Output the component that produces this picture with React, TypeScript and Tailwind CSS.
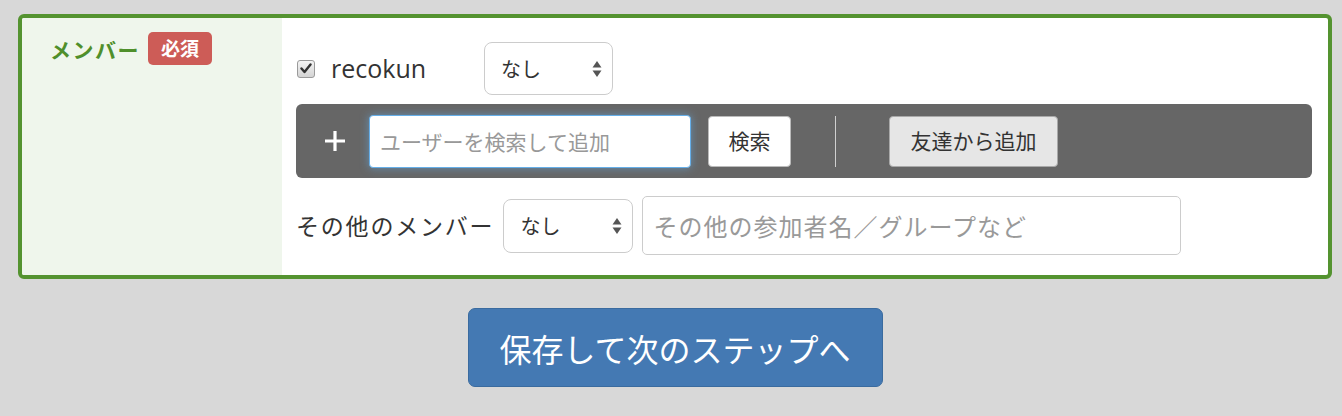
import React from 'react'

const jp = { fontFamily: '"Noto Sans CJK JP", "Noto Sans", sans-serif' }

const SelectBox = ({ value, className }: { value: string; className: string }) => {
  return (
    <div
      className={`flex items-center justify-between rounded-lg border border-[#cccccc] bg-white pl-[16px] pr-[10px] text-[20px] text-[#333] ${className}`}
    >
      <span>{value}</span>
      <svg width="10" height="20" viewBox="0 0 10 20">
        <path d="M5 2 L9.5 8.5 H0.5 Z" fill="#555" />
        <path d="M5 18 L9.5 11.5 H0.5 Z" fill="#555" />
      </svg>
    </div>
  )
}

export default function App() {
  return (
    <div className="min-h-[416px] w-full bg-[#d8d8d8] pt-[14px]" style={jp}>
      <div className="ml-[18px] mr-[10px]">
        {/* member card */}
        <div className="flex h-[265px] overflow-hidden rounded-[6px] border-4 border-[#549330] bg-white">
          <div className="flex w-[260px] flex-none items-start gap-[8px] bg-[#eff6ec] pl-[28px] pt-[14px]">
            <span className="mt-[2px] text-[21px] font-bold tracking-[1.5px] text-[#4f8f2b]">メンバー</span>
            <span className="flex h-[33px] w-[64px] items-center justify-center rounded-[5px] bg-[#cd5c57] text-[19px] font-bold text-white">
              必須
            </span>
          </div>

          <div className="flex flex-1 flex-col pl-[14px] pr-[16px] pt-[24px]">
            <div className="flex items-center">
              <span className="ml-[1px] flex h-[18px] w-[18px] items-center justify-center rounded-[3px] border border-[#9a9a9a] bg-gradient-to-b from-[#f4f4f4] to-[#d4d4d4]">
                <svg width="12" height="11" viewBox="0 0 12 11">
                  <path d="M1.5 5.5 L4.5 9 L10.5 1.5" stroke="#333" strokeWidth="2.4" fill="none" strokeLinecap="round" strokeLinejoin="round" />
                </svg>
              </span>
              <span className="ml-[16px] w-[153px] text-[25px] font-medium text-[#333]" style={{ fontFamily: '"Open Sans", sans-serif' }}>
                recokun
              </span>
              <SelectBox value="なし" className="h-[53px] w-[129px]" />
            </div>

            <div className="mt-[9px] flex h-[74px] items-center rounded-[6px] bg-[#666666] pl-[26px]">
              <svg width="24" height="24" viewBox="0 0 24 24" className="ml-[1px]">
                <path d="M12 2 V22 M2 12 H22" stroke="white" strokeWidth="3.2" />
              </svg>
              <input
                readOnly
                placeholder="ユーザーを検索して追加"
                className="ml-[22px] h-[53px] w-[322px] rounded-[4px] border border-[#66afe9] bg-white px-[10px] text-[21px] text-[#333] shadow-[0_0_8px_rgba(102,175,233,0.6)] outline-none placeholder:text-[#999]"
                style={jp}
              />
              <button className="ml-[17px] h-[51px] w-[83px] rounded-[4px] border border-[#bbbbbb] bg-white text-[21px] text-[#333]" style={jp}>
                検索
              </button>
              <div className="ml-[44px] h-[51px] w-px bg-[#d0d0d0]" />
              <button className="ml-[53px] h-[51px] w-[169px] rounded-[4px] border border-[#a9a9a9] bg-[#e6e6e6] text-[21px] text-[#333]" style={jp}>
                友達から追加
              </button>
            </div>

            <div className="mt-[18px] flex items-center">
              <span className="text-[23px] tracking-[1.8px] text-[#333]">その他のメンバー</span>
              <SelectBox value="なし" className="ml-[9px] h-[54px] w-[130px]" />
              <input
                readOnly
                placeholder="その他の参加者名／グループなど"
                className="ml-[9px] h-[59px] w-[539px] rounded-[5px] border border-[#cccccc] bg-white px-[10px] text-[24px] tracking-[1px] text-[#333] outline-none placeholder:text-[#999]"
                style={jp}
              />
            </div>
          </div>
        </div>

        <div className="mt-[29px] flex justify-center">
          <button className="h-[79px] w-[415px] rounded-[7px] border border-[#3a6b9f] bg-[#4479b3] text-[32px] text-white" style={jp}>
            保存して次のステップへ
          </button>
        </div>
      </div>
    </div>
  )
}
